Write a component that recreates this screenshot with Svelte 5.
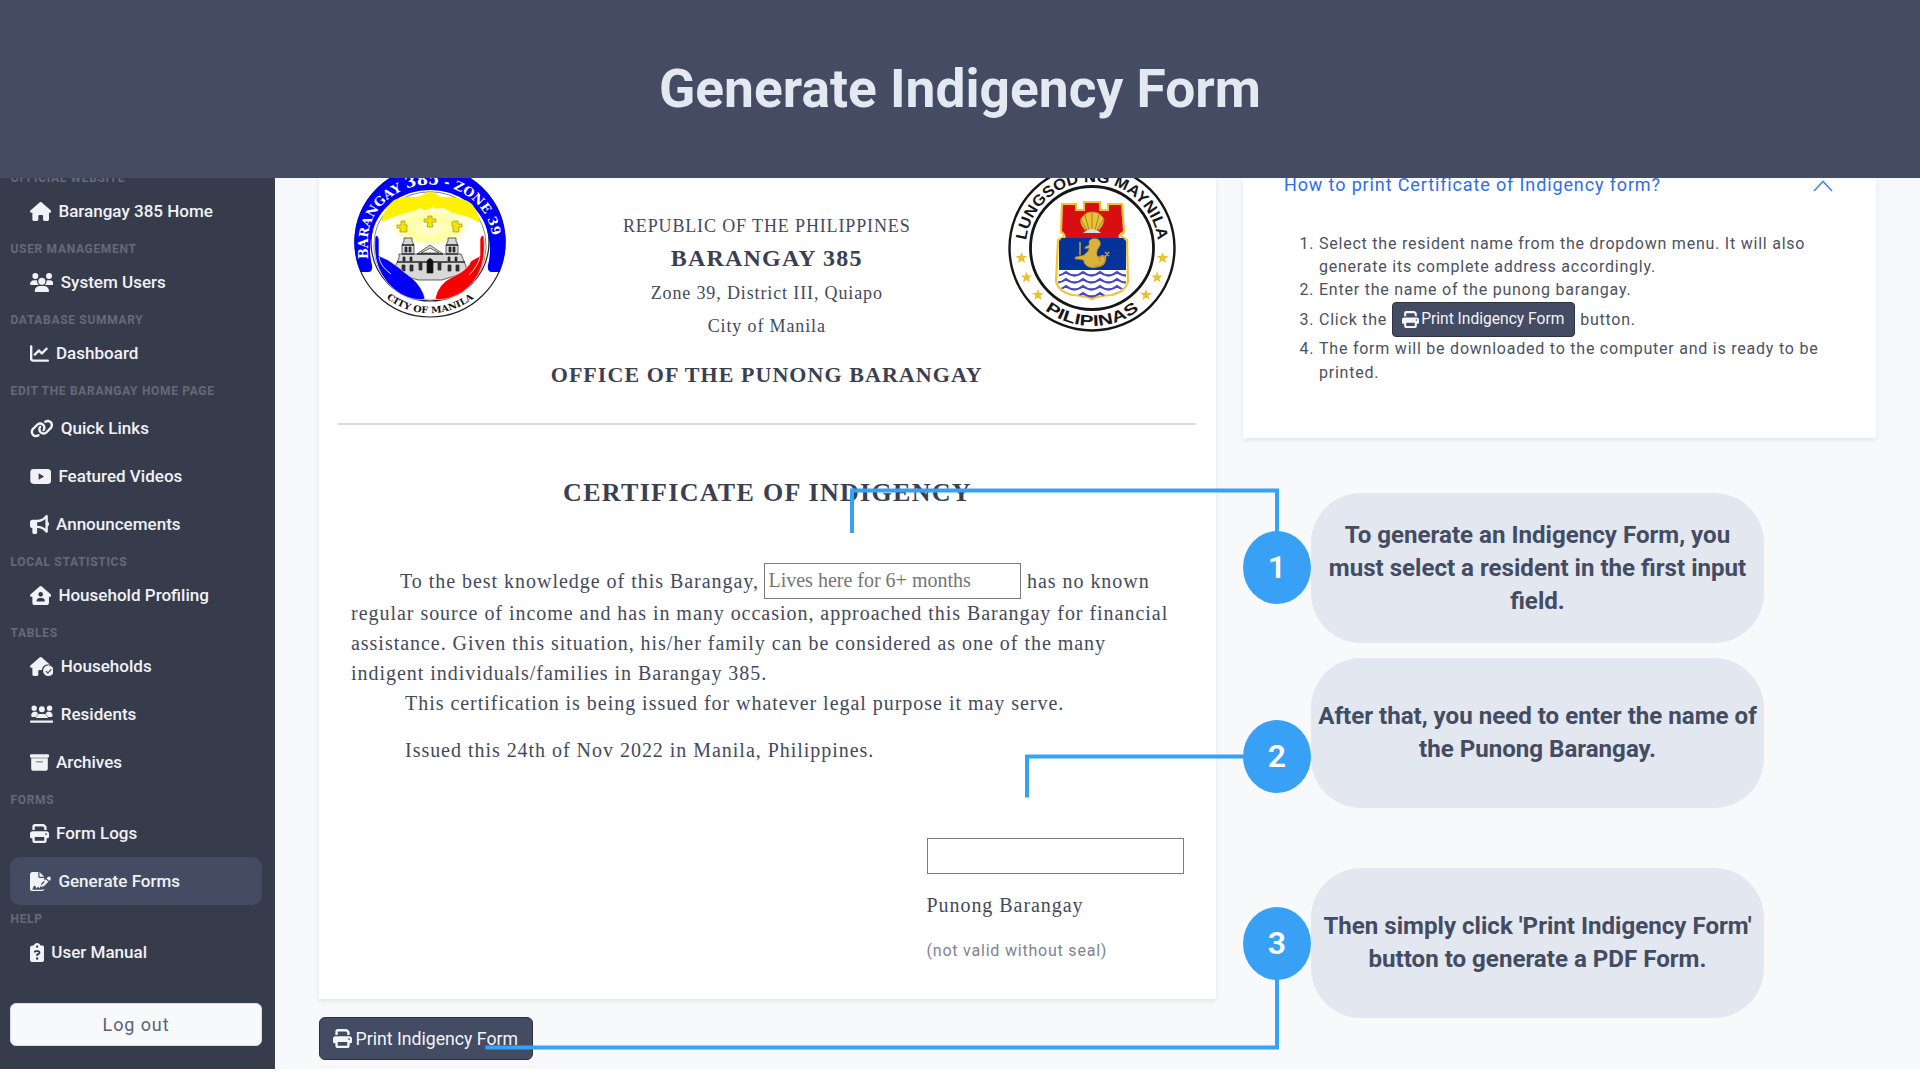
<script>
  // Glyphs: [viewBox width, path data]; every one is 512 units tall.
  const icons = {
    home: [576, 'M575.8 255.5c0 18-15 32.1-32 32.1h-32l.7 160.2c0 2.7-.2 5.4-.5 8.1V472c0 22.1-17.9 40-40 40H392c-22.1 0-40-17.9-40-40v-88c0-17.7-14.3-32-32-32h-64c-17.7 0-32 14.3-32 32v88c0 22.1-17.9 40-40 40h-80c-22.1 0-40-17.9-40-40V287.6H32c-18 0-32-14-32-32.1 0-9 3-17 10-24L266.4 8c7-7 15-8 22-8s15 2 21 7l255.4 224.5c8 7 12 15 11 24z'],
    users: [640, 'M144 0a80 80 0 1 1 0 160A80 80 0 1 1 144 0zM512 0a80 80 0 1 1 0 160A80 80 0 1 1 512 0zM0 298.7C0 239.800 47.800 192 106.700 192h42.700c15.900 0 31 3.500 44.600 9.700-1.300 7.200-1.900 14.700-1.900 22.300 0 38.200 16.800 72.500 43.300 96H21.300C9.600 320 0 310.400 0 298.700zM405.300 320h-.7c26.600-23.500 43.300-57.800 43.300-96 0-7.600-.7-15-1.900-22.300 13.600-6.300 28.700-9.700 44.600-9.700h42.700C592.200 192 640 239.800 640 298.700c0 11.800-9.600 21.300-21.300 21.300zM224 224a96 96 0 1 1 192 0 96 96 0 1 1-192 0zM128 485.300C128 411.700 187.700 352 261.300 352h117.300C452.300 352 512 411.700 512 485.300c0 14.700-11.900 26.700-26.700 26.700H154.700c-14.700 0-26.700-11.900-26.700-26.700z'],
    chart: [512, 'M64 64c0-17.700-14.300-32-32-32S0 46.300 0 64V400c0 44.200 35.800 80 80 80H480c17.700 0 32-14.300 32-32s-14.300-32-32-32H80c-8.800 0-16-7.200-16-16V64zm406.600 86.600c12.500-12.500 12.500-32.800 0-45.300s-32.800-12.500-45.300 0L320 210.700l-57.400-57.400c-12.500-12.500-32.800-12.500-45.300 0l-112 112c-12.500 12.500-12.500 32.800 0 45.300s32.800 12.500 45.300 0L240 221.300l57.400 57.400c12.500 12.500 32.800 12.500 45.300 0l128-128z'],
    link: [640, 'M579.8 267.7c56.5-56.5 56.5-148 0-204.5c-50-50-128.800-56.500-186.300-15.400l-1.600 1.100c-14.400 10.300-17.700 30.300-7.400 44.600s30.300 17.700 44.600 7.400l1.600-1.100c32.100-22.900 76-19.300 103.800 8.600c31.500 31.500 31.500 82.500 0 114L422.300 334.800c-31.500 31.500-82.500 31.500-114 0c-27.900-27.900-31.500-71.800-8.600-103.800l1.100-1.600c10.300-14.400 6.900-34.400-7.400-44.600s-34.400-6.900-44.600 7.400l-1.100 1.600C206.500 251.200 213 330 263 380c56.500 56.500 148 56.500 204.500 0L579.800 267.700zM60.200 244.300c-56.500 56.500-56.500 148 0 204.500c50 50 128.800 56.500 186.300 15.400l1.600-1.100c14.400-10.300 17.700-30.300 7.400-44.600s-30.300-17.700-44.600-7.400l-1.600 1.100c-32.100 22.900-76 19.300-103.800-8.600C74 372 74 321 105.500 289.500L217.700 177.200c31.500-31.500 82.500-31.500 114 0c27.900 27.900 31.500 71.800 8.600 103.900l-1.100 1.600c-10.300 14.400-6.900 34.400 7.400 44.600s34.400 6.900 44.600-7.400l1.100-1.600C433.500 260.800 427 182 377 132c-56.500-56.500-148-56.500-204.500 0L60.200 244.300z'],
    video: [576, 'M100 56H476C535 56 568 88 568 146V366C568 424 535 456 476 456H100C41 456 8 424 8 366V146C8 88 41 56 100 56zM232 170V342L380 256z'],
    horn: [512, 'M480 32c0-12.900-7.800-24.600-19.800-29.600s-25.700-2.200-34.900 6.900L381.700 53c-48 48-113.100 75-181 75H64c-35.300 0-64 28.700-64 64v96c0 35.300 28.700 64 64 64v128c0 17.700 14.300 32 32 32h64c17.700 0 32-14.300 32-32V352h8.700c67.900 0 133 27 181 75l43.600 43.600c9.200 9.200 22.900 11.900 34.900 6.900s19.800-16.600 19.800-29.600V300.400c18.600-8.800 32-32.500 32-60.400s-13.400-51.600-32-60.400V32zM416 108.700V371.300C357.200 317.800 280.500 288 200.700 288H192V192h8.700c79.800 0 156.500-29.800 215.300-83.300z'],
    houseUser: [576, 'M266 9q22-18 44 0L565 231c25 24 8 57-22 57H512V448c0 35-29 64-64 64H128c-35 0-64-29-64-64V288H32C2 288-14 255 10 231zM288 160a64 64 0 1 0 0 128 64 64 0 1 0 0-128zM176 400c0 9 7 16 16 16H384c9 0 16-7 16-16 0-44-36-80-80-80H256c-44 0-80 36-80 80z'],
    houseCheck: [640, 'M266 9q22-18 44 0L548 216C420 174 320 257 320 368v-16H256c-18 0-32 14-32 32v88c0 22-18 40-40 40H104c-22 0-40-18-40-40V288H32C2 288-14 255 10 231zM496 224a144 144 0 1 0 0 288 144 144 0 1 0 0-288zM564 324l22 22-106 106-62-62 22-22 40 40z'],
    residents: [640, 'M184 88a72 72 0 1 1-144 0 72 72 0 1 1 144 0zM600 88a72 72 0 1 1-144 0 72 72 0 1 1 144 0zM320 32a80 80 0 1 1 0 160 80 80 0 1 1 0-160zM32 280c0-56 40-96 90-96H180q20 46 58 66-56 26-64 70H60c-18 0-28-18-28-40zM460 184h58c50 0 90 40 90 96 0 22-10 40-28 40H466q-8-44-64-70 38-20 58-66zM250 240H390c50 0 90 52 90 112H160c0-60 40-112 90-112zM32 416H608c42 0 42 64 0 64H32c-42 0-42-64 0-64z'],
    archive: [512, 'M32 32H480c18 0 32 14 32 32v32c0 18-14 32-32 32H32C14 128 0 114 0 96V64c0-18 14-32 32-32zM32 140H480V416c0 35-29 64-64 64H96c-35 0-64-29-64-64zM176 228c-20 0-20 24 0 24H336c20 0 20-24 0-24z'],
    print: [512, 'M128 0C92.700 0 64 28.700 64 64v96h64V64H354.700L384 93.300V160h64V93.300c0-17-6.700-33.300-18.700-45.300L400 18.700C388 6.700 371.700 0 354.700 0H128zM384 352v96H128V352H384zm64 32h32c17.700 0 32-14.300 32-32V256c0-35.300-28.700-64-64-64H64c-35.300 0-64 28.700-64 64v96c0 17.700 14.300 32 32 32H64v64c0 35.300 28.700 64 64 64H384c35.300 0 64-28.700 64-64V384zM432 248a24 24 0 1 1 0 48 24 24 0 1 1 0-48z'],
    sign: [576, 'M64 0H224V128c0 18 14 32 32 32H384V280L292 372c-8 8-14 18-17 29l-10 39c-6-1-9-4-12-10-14-29-52-28-68-8l-16 22-16-54c-9-30-49-30-58 0l-17 56c-2 7-8 12-15 12v22H300c30 0 55-4 84-12v4c0 22-29 40-64 40H64c-35 0-64-29-64-64V64C0 29 29 0 64 0zM256 0L384 128H256zM549 139c-22-20-53-20-74 0l-29 30 71 71 30-30c20-20 20-51 2-71zM311 305L424 192l71 71-113 113c-4 4-9 7-15 8l-60 15c-12 3-22-7-19-19l15-60c1-6 4-11 8-15z'],
    manual: [384, 'M192 0c-42 0-77 27-91 64H64C29 64 0 93 0 128V448c0 35 29 64 64 64H320c35 0 64-29 64-64V128c0-35-29-64-64-64H283C269 27 234 0 192 0zM192 64a32 32 0 1 1 0 64 32 32 0 1 1 0-64zM105 230c8-22 29-38 53-38h59c34 0 62 28 62 62 0 23-12 43-32 55l-31 18c-1 33-48 33-48-1v-13c0-9 5-17 12-21l43-25c12-7 10-27-6-27h-59c-4 0-7 2-8 6-10 30-56 13-45-16zM192 384a32 32 0 1 1 0 64 32 32 0 1 1 0-64z']
  };

  const nav = [
    { label: 'Official website', items: [['home', 'Barangay 385 Home']] },
    { label: 'User management', items: [['users', 'System Users']] },
    { label: 'Database summary', items: [['chart', 'Dashboard']] },
    { label: 'Edit the barangay home page', roomy: true, items: [['link', 'Quick Links'], ['video', 'Featured Videos'], ['horn', 'Announcements']] },
    { label: 'Local statistics', items: [['houseUser', 'Household Profiling']] },
    { label: 'Tables', items: [['houseCheck', 'Households'], ['residents', 'Residents'], ['archive', 'Archives']] },
    { label: 'Forms', items: [['print', 'Form Logs'], ['sign', 'Generate Forms']] },
    { label: 'Help', items: [['manual', 'User Manual']] }
  ];
  const active = 'Generate Forms';

  const stars = [[-70.5, 10], [-65.5, 29.5], [-54, 47], [70.5, 10], [65, 29.5], [54, 47]];
  const waves = [0, 7, 14, 21];
</script>

{#snippet icon(name)}
  <svg class="icon" viewBox="0 0 {icons[name][0]} 512" style:width="{icons[name][0] / 512}em" aria-hidden="true">
    <path fill="currentColor" fill-rule="evenodd" d={icons[name][1]} />
  </svg>
{/snippet}

<div class="page">
  <header><h1>Generate Indigency Form</h1></header>

  <div class="app">
    <nav>
      {#each nav as group}
        <h2 class:roomy={group.roomy}>{group.label}</h2>
        {#each group.items as [glyph, text]}
          <a href="#top" class:active={text === active}>{@render icon(glyph)}<span>{text}</span></a>
        {/each}
      {/each}
      <button class="logout">Log out</button>
    </nav>

    <main>
      <section class="left">
        <article class="doc">
          <div class="letterhead">
            <svg class="seal-a" viewBox="-76 -76 152 152">
              <defs>
                <path id="ringTop" d="M-62.500 19 V0 A62.500 57.500 0 0 1 62.500 0 V10" />
                <path id="ringBottom" d="M-52 48.500 A71 71 0 0 0 52 48.500" />
                <radialGradient id="glow" cx="50%" cy="60%" r="60%">
                  <stop offset="0" stop-color="#ffffd8" /><stop offset=".5" stop-color="#ffffa0" /><stop offset="1" stop-color="#fff" />
                </radialGradient>
              </defs>
              <circle r="75" fill="#fff" stroke="#222" stroke-width="1.200" />
              <circle r="59" fill="#fff" stroke="#222" stroke-width="1.200" />
              <path d="M-69.500 30 A75.700 75.700 0 1 1 69.500 30 L61 30 Q57 29 58 23 A62 62 0 0 0 58 -8 A59 54 0 0 0 -58 -8 A62 62 0 0 0 -58 23 Q-57 29 -61 30 Z" fill="#0000fa" />
              <path d="M-55 -8A56 52 0 0 1 55 -8Q60 20 43 38A56 56 0 0 1 -43 38Q-60 20 -55 -8Z" fill="#fff" stroke="#333" stroke-width=".6" />
              <ellipse cx="0" cy="-18" rx="38" ry="20" fill="url(#glow)" />
              <path d="M-49 -20 Q-46 -34 -36 -42 Q-26 -46 -14 -45 Q-8 -46 -4 -49 Q2 -52 6 -48 Q12 -44 16 -45 Q34 -45 42 -38 Q49 -29 50 -19 Q36 -27 22 -29 Q12 -36 8 -33 L2 -35 Q-3 -29 -10 -34 Q-16 -30 -24 -29 Q-38 -25 -49 -20Z" fill="#fff200" />
              <g fill="#f5e300" stroke="#8a8420" stroke-width=".6">
                <path d="M-2 -26h4v3h4v3h-4l1 5h-6l1-5h-4v-3h4z" />
                <path d="M-29 -21h4v4h2v7h-7v-4h-3v-3h4z" />
                <path d="M24 -21h4v3h4v3h-3v5h-6v-6h-1v-4z" />
              </g>
              <g fill="#d8d8d8" stroke="#222" stroke-width=".7">
                <path d="M-37 30L-31 16V12H-28V3L-26 -1V-4H-18V-1L-16 3V12H-13L0 3L13 12H16V3L18 -1V-4H26V-1L28 3V12H31L36 24V30L12 38H-12Z" />
                <path d="M-28 3H-16M-28 12H-16M16 3H28M16 12H28M-33 20H35M-13 12H13" stroke-width="1.400" />
                <path d="M-25 5h2v5h-2zM-21 5h2v5h-2zM19 5h2v5h-2zM23 5h2v5h-2zM-27 15h2v4h-2zM-20 15h2v4h-2zM18 15h2v4h-2zM25 15h2v4h-2zM-28 23h3v6h-3zM-20 23h3v6h-3zM18 23h3v6h-3zM26 23h3v6h-3zM-11 21h3v7h-3zM8 21h3v7h-3z" fill="#333" />
                <path d="M-3 31V19Q0 14 3 19V31Z" fill="#111" />
                <path d="M-9 11L0 6L9 11Z" fill="#fff" />
              </g>
              <path d="M-55 -5 Q-53 -9 -51 -3 V14 L-42 18 Q-30 26 -26 30 L-18 36 Q-7 46 -5 57 Q-11 59 -23 55 Q-37 50 -48 33 Q-57 18 -55 -5Z" fill="#0000fa" stroke="#fff" stroke-width=".6" />
              <path d="M54 -5 Q52 -9 50 -3 V14 L41 19 Q38 28 22 35 Q8 42 5 57 Q13 59 25 54 Q38 49 48 33 Q56 18 54 -5Z" fill="#f80000" stroke="#fff" stroke-width=".6" />
              <path d="M-51 15Q-50 24 -39 32M50 15Q48 24 39 33" fill="none" stroke="#fff" stroke-width=".9" />
              <text class="ring white"><textPath href="#ringTop" startOffset="2" textLength="199" lengthAdjust="spacingAndGlyphs">BARANGAY <tspan class="zone-no">385</tspan> - ZONE 39</textPath></text>
              <text class="ring black"><textPath href="#ringBottom" startOffset="50%" text-anchor="middle" textLength="94" lengthAdjust="spacingAndGlyphs">CITY OF MANILA</textPath></text>
            </svg>

            <div class="heading">
              <p class="rep">REPUBLIC OF THE PHILIPPINES</p>
              <p class="brgy">BARANGAY 385</p>
              <p class="zone">Zone 39, District III, Quiapo</p>
              <p class="city">City of Manila</p>
              <p class="office">OFFICE OF THE PUNONG BARANGAY</p>
            </div>

            <svg class="seal-b" viewBox="-84 -84 168 168">
              <defs>
                <path id="cityTop" d="M-66 -5 A66.200 66.200 0 0 1 66 -5" />
                <path id="cityBottom" d="M-56 54 A77.500 77.500 0 0 0 56 54" />
                <clipPath id="shieldClip"><path d="M-32 20H34V34Q33 42 20 46Q6 48 0 51Q-6 48 -20 46Q-33 42 -34 34Z" /></clipPath>
              </defs>
              <circle r="82.500" fill="#fff" stroke="#161616" stroke-width="2.400" />
              <circle r="61.500" fill="#fff" stroke="#161616" stroke-width="2.800" />
              <path d="M-30 -44H-16V-38H-8V-46H8V-38H16V-44H30L32 -16Q26 -12 32 -10L35 -8L36 34Q33 44 20 47Q6 48 0 51Q-6 48 -20 47Q-33 44 -36 34L-34 -8L-30 -10Q-25 -13 -31 -16Z" fill="#fff" stroke="#f2c230" stroke-width="2.200" />
              <path d="M-29 -43H-17V-37H-7V-45H7V-37H17V-43H29L31 -17Q25 -13 27 -10H-27Q-25 -13 -30 -17Z" fill="#d90e12" />
              <path d="M-30 -10H31L34 -7V22H-33V-7Z" fill="#04349a" />
              <g clip-path="url(#shieldClip)">
                {#each waves as dy}
                  <path class="wave" transform="translate(0 {dy})" d="M-43 24Q-34.500 31 -26 24Q-17.500 31 -9 24Q-.5 31 8 24Q16.500 31 25 24Q33.500 31 42 24" />
                {/each}
              </g>
              <path d="M-7 -18Q-15 -27 -9 -32Q-4 -37 0 -36Q5 -37 10 -32Q15 -27 7 -18Z" fill="#e8c33a" stroke="#a8761c" stroke-width=".8" />
              <path d="M0 -18V-35M-3 -18L-7 -33M3 -18L7 -33M-5 -18L-11 -28M5 -18L11 -28" stroke="#a8761c" stroke-width=".9" />
              <path d="M-9 -15Q0 -23 9 -15Z" fill="#ddd" />
              <path d="M-3 -7Q0 -11 6 -9Q10 -6 8 -2Q4 2 5 7Q6 10 10 8Q15 6 14 12Q10 19 2 20Q-7 20 -9 12L-17 11V9L-8 7Q-3 3 -3 0L-7 1V-1L-3 -3Z" fill="#d9b13b" stroke="#8a6a1d" stroke-width=".6" />
              <path d="M-12 -6V7M3 18Q13 19 13 11Q12 6 8 9Q6 12 9 13M13 9L17 4M13 4L17 8" fill="none" stroke="#c79a2b" stroke-width="1.600" />
              {#each stars as [x, y]}
                <path transform="translate({x} {y})" d="M0 -6L1.500 -1.900L5.800 -1.900L2.400 .8L3.600 5L0 2.500L-3.600 5L-2.400 .8L-5.800 -1.900L-1.500 -1.900Z" fill="#ebc22c" />
              {/each}
              <text class="sans"><textPath href="#cityTop" startOffset="50%" text-anchor="middle" textLength="192" lengthAdjust="spacingAndGlyphs">LUNGSOD NG MAYNILA</textPath></text>
              <text class="sans"><textPath href="#cityBottom" startOffset="50%" text-anchor="middle" textLength="101" lengthAdjust="spacingAndGlyphs">PILIPINAS</textPath></text>
            </svg>
          </div>

          <hr />
          <h3>CERTIFICATE OF INDIGENCY</h3>

          <div class="body">
            <div class="first">
              <span>To the best knowledge of this Barangay,</span>
              <input class="resident" placeholder="Lives here for 6+ months" />
              <span>has no known</span>
            </div>
            <p>regular source of income and has in many occasion, approached this Barangay for financial<br />assistance. Given this situation, his/her family can be considered as one of the many<br />indigent individuals/families in Barangay 385.</p>
            <p class="indent">This certification is being issued for whatever legal purpose it may serve.</p>
            <p class="indent issued">Issued this 24th of Nov 2022 in Manila, Philippines.</p>
          </div>

          <div class="signature">
            <input aria-label="Punong Barangay" />
            <p>Punong Barangay</p>
            <small>(not valid without seal)</small>
          </div>
        </article>
        <button class="print">{@render icon('print')}<span>Print Indigency Form</span></button>
      </section>

      <aside>
        <div class="question">
          <span>How to print Certificate of Indigency form?</span>
          <svg viewBox="0 0 20 12"><path d="M1 11L10 1.500L19 11" fill="none" stroke="#4a8be8" stroke-width="1.700" /></svg>
        </div>
        <ol>
          <li><b>1.</b><span>Select the resident name from the dropdown menu. It will also<br />generate its complete address accordingly.</span></li>
          <li class="tight"><b>2.</b><span>Enter the name of the punong barangay.</span></li>
          <li class="withbtn"><b>3.</b><span>Click the</span><button class="print small">{@render icon('print')}<span>Print Indigency Form</span></button><span>button.</span></li>
          <li><b>4.</b><span>The form will be downloaded to the computer and is ready to be<br />printed.</span></li>
        </ol>
      </aside>
    </main>
  </div>

  <svg class="leaders" viewBox="0 0 1920 1080" aria-hidden="true">
    <path d="M852 533V490.500H1277V540" />
    <path d="M1027 797.500V756.500H1250" />
    <path d="M485.500 1047.500H1277V970" />
  </svg>
  <div class="callout one"><span class="num">1</span><p>To generate an Indigency Form, you<br />must select a resident in the first input<br />field.</p></div>
  <div class="callout two"><span class="num">2</span><p>After that, you need to enter the name of<br />the Punong Barangay.</p></div>
  <div class="callout three"><span class="num">3</span><p>Then simply click 'Print Indigency Form'<br />button to generate a PDF Form.</p></div>
</div>

<style>
  :global(body) { margin: 0; background: #fff; }
  .page { position: relative; width: 1920px; height: 1080px; overflow: hidden; font-family: Roboto, "Liberation Sans", sans-serif; box-sizing: border-box; display: grid; grid-template-rows: 178px 891px; }
  .page :is(div, a, button, input, p, nav, article, aside, h2, h3, li) { box-sizing: border-box; }
  p, h1, h2, h3 { margin: 0; }
  button, input { font: inherit; margin: 0; }

  header { background: #434c63; display: flex; align-items: center; justify-content: center; }
  h1 { font-size: 53.300px; font-weight: 700; line-height: 60px; color: #e3e8f1; }

  .app { display: grid; grid-template-columns: 275px 1fr; background: #f8f9fb; overflow: hidden; }

  nav { background: #373c4d; padding: 0 13px 0 10px; display: flex; flex-direction: column; margin-top: -14px; }
  h2 { height: 23px; padding: 5px 0 0 .5px; font-size: 12px; line-height: 18px; font-weight: 700; letter-spacing: .68px; color: #656a76; text-transform: uppercase; white-space: nowrap; }
  h2.roomy { height: 27px; }
  a { height: 48px; padding-left: 19.500px; display: flex; align-items: center; gap: 7.500px; color: #f1f2f5; text-decoration: none; font-size: 17.050px; font-weight: 500; border-radius: 10px; white-space: nowrap; }
  a .icon { font-size: 19px; }
  a.active { background: #434c63; }
  .icon { display: block; height: 1em; flex: none; }
  .logout { margin-top: 27px; height: 43px; padding: 0; border: 1px solid #d7dade; border-radius: 6px; background: #f8f9fb; color: #5c6272; font-size: 18px; letter-spacing: .9px; }

  main { display: grid; grid-template-columns: 897px 633px; column-gap: 27px; padding-left: 44px; align-items: start; }
  .doc { background: #fff; height: 821px; box-shadow: 0 2px 5px rgba(40, 50, 70, .1); color: #434a5c; font-family: "Liberation Serif", serif; font-size: 20px; letter-spacing: .97px; }
  .letterhead { display: grid; grid-template-columns: 152px 1fr 168px; padding: 0 40.500px 0 35px; height: 245px; }
  .seal-a { width: 152px; height: 152px; margin-top: -12px; }
  .seal-b { width: 168px; height: 168px; margin-top: -14px; }
  .ring { font-family: "DejaVu Serif", serif; font-weight: 700; letter-spacing: 0; }
  .white { fill: #fff; font-size: 12.500px; }
  .zone-no { font-size: 15.500px; }
  .black { fill: #111; font-size: 9px; }
  .sans { font-family: "Liberation Sans", sans-serif; font-weight: 700; font-size: 15.500px; letter-spacing: 0; fill: #161616; }
  .wave { fill: none; stroke: #4a48c0; stroke-width: 2.200; }
  .heading { padding: 33px 0 0 20px; text-align: center; white-space: nowrap; display: flex; flex-direction: column; align-items: center; }
  .heading p { font-size: 18px; letter-spacing: .87px; }
  .rep { line-height: 30px; }
  .heading .brgy { font-size: 24px; line-height: 35px; font-weight: 700; letter-spacing: 1.200px; color: #3a4052; }
  .zone { line-height: 34px; }
  .city { line-height: 32px; }
  .heading .office { font-size: 22px; line-height: 65px; font-weight: 700; letter-spacing: 1.060px; color: #3a4052; }
  hr { margin: 0 20px 0 19px; border: 0; height: 2px; background: #d9dbde; }
  h3 { font-size: 26px; line-height: 136px; height: 137px; font-weight: 700; letter-spacing: 1.300px; text-align: center; color: #3a4052; }
  .body { padding-left: 32px; white-space: nowrap; line-height: 30px; }
  .first { display: flex; align-items: center; padding-left: 49px; height: 37px; margin-bottom: -1px; gap: 5.500px; }
  input { display: block; width: 257px; height: 36px; padding: 0 3px; border: 1.500px solid #7b7b7b; border-radius: 0; background: #fff; letter-spacing: 0; }
  input::placeholder { color: #757575; opacity: 1; }
  .indent { padding-left: 54px; }
  .issued { margin-top: 17px; }
  .signature { margin: 73px 0 0 607.500px; }
  .signature p { margin-top: 16px; line-height: 30px; letter-spacing: .95px; }
  small { display: block; font-family: Roboto, sans-serif; font-size: 16px; line-height: 61px; letter-spacing: .79px; color: #7d8490; }

  .print { display: flex; align-items: center; gap: 4px; width: 214px; height: 43px; margin-top: 18px; padding: 0 0 0 12.500px; border: 1.500px solid #2c3242; border-radius: 6px; background: #434c63; color: #f4f5f8; font-size: 17.700px; white-space: nowrap; letter-spacing: 0; }
  .print .icon { font-size: 19px; }
  .small { width: 183px; height: 35px; margin: 0; padding-left: 8.500px; gap: 2.500px; border-radius: 4px; font-size: 15.600px; }
  .small .icon { font-size: 17px; }

  aside { background: #fff; height: 260px; padding-left: 41px; box-shadow: 0 2px 5px rgba(40, 50, 70, .1); font-size: 16px; letter-spacing: .77px; color: #4b5160; white-space: nowrap; }
  .question { display: flex; justify-content: space-between; align-items: center; height: 30px; margin-top: -9px; padding-right: 43px; font-size: 18px; letter-spacing: .87px; color: #2f6de6; }
  .question svg { width: 20px; height: 12px; margin-top: 4px; }
  ol { list-style: none; margin: 32.500px 0 0; padding: 0 0 0 15.500px; }
  li { display: flex; line-height: 23.500px; }
  li b { font-weight: 400; width: 19.500px; }
  .tight { line-height: 21px; height: 23.500px; }
  .withbtn { height: 35px; align-items: center; line-height: 21px; }
  .withbtn .small { margin: 0 5px; }

  .leaders { position: absolute; inset: 0; width: 1920px; height: 1080px; }
  .leaders path { fill: none; stroke: #38a1f6; stroke-width: 4; }
  .callout { position: absolute; left: 1311px; width: 453px; height: 150px; border-radius: 50px; background: #e2e7f0; display: flex; justify-content: center; text-align: center; color: #434c63; font-size: 24.100px; font-weight: 700; line-height: 33px; white-space: nowrap; }
  .one { top: 493px; padding-top: 26px; }
  .two { top: 658px; padding-top: 42px; }
  .three { top: 868px; padding-top: 42px; }
  .num { position: absolute; left: -68px; width: 68px; height: 73px; border-radius: 50%; background: #38a1f6; color: #fff; font-size: 32px; font-weight: 600; line-height: 72px; }
  .one .num { top: 38px; }
  .two .num { top: 62px; }
  .three .num { top: 38.500px; }
</style>
